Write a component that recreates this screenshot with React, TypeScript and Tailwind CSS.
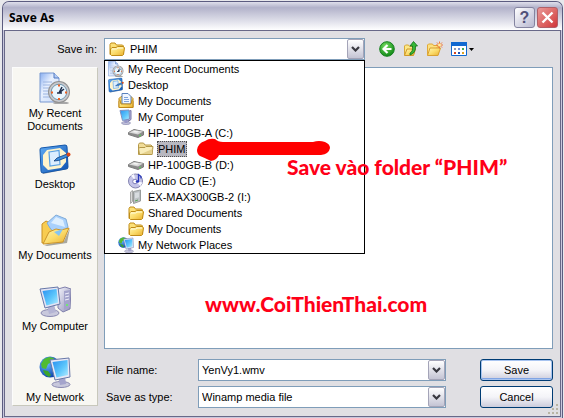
import { useState, type ComponentType, type ReactNode } from 'react'

type IconProps = { className?: string }

function IconDefs() {
  return (
    <svg className="absolute h-0 w-0" aria-hidden="true">
      <defs>
        <linearGradient id="folder" x1="0" y1="0" x2="1" y2="1">
          <stop offset="0" stopColor="#fff6b4" />
          <stop offset="0.5" stopColor="#fbdc6c" />
          <stop offset="1" stopColor="#e8ae2c" />
        </linearGradient>
        <linearGradient id="screen" x1="0" y1="0" x2="1" y2="1">
          <stop offset="0" stopColor="#2a90f0" />
          <stop offset="0.55" stopColor="#5cc6fc" />
          <stop offset="1" stopColor="#b4ecff" />
        </linearGradient>
        <linearGradient id="metal" x1="0" y1="0" x2="1" y2="1">
          <stop offset="0" stopColor="#f4f4fc" />
          <stop offset="1" stopColor="#9090b8" />
        </linearGradient>
        <linearGradient id="paper" x1="0" y1="0" x2="1" y2="1">
          <stop offset="0" stopColor="#88aef0" />
          <stop offset="0.4" stopColor="#e8f0fe" />
          <stop offset="1" stopColor="#c4d8f8" />
        </linearGradient>
        <linearGradient id="pad" x1="0" y1="0" x2="1" y2="1">
          <stop offset="0" stopColor="#60acf4" />
          <stop offset="1" stopColor="#0c50b0" />
        </linearGradient>
        <radialGradient id="globe" cx="0.35" cy="0.35" r="0.7">
          <stop offset="0" stopColor="#68b8ff" />
          <stop offset="1" stopColor="#0840a8" />
        </radialGradient>
        <radialGradient id="green" cx="0.4" cy="0.3" r="0.7">
          <stop offset="0" stopColor="#74dc60" />
          <stop offset="1" stopColor="#128a18" />
        </radialGradient>
      </defs>
    </svg>
  )
}

function RecentIcon({ className }: IconProps) {
  return (
    <svg viewBox="0 0 32 32" className={className} aria-hidden="true">
      <path d="M1 1h14l5 5v24H1z" fill="url(#paper)" stroke="#7898d0" />
      <path d="M15 1v5h5" fill="#b4ccf4" stroke="#5078c0" />
      <path d="M4 10h9M4 13h7M4 16h6M4 19h5M4 22h6M4 25h8" stroke="#9cb4e0" />
      <ellipse cx="22" cy="31" rx="8" ry="1.5" fill="#a8a8a8" />
      <circle cx="20" cy="20" r="11" fill="#909090" />
      <circle cx="20" cy="20" r="10" fill="#c8c8cc" />
      <circle cx="20" cy="20" r="7.8" fill="#eaf6fe" stroke="#7098b0" />
      <path d="M20 21l5-4M20 21l3-6M18 21h5" stroke="#20304c" strokeWidth="1.6" />
      <path d="M19 12.500h2v2h-2zM19 26h2v2h-2zM12 19.500h2v2h-2zM26 19.500h2v2h-2z" fill="#f06020" />
    </svg>
  )
}

function DesktopIcon({ className }: IconProps) {
  return (
    <svg viewBox="0 0 32 32" className={className} aria-hidden="true">
      <path d="M3 6l25-4 1 24-25 5z" fill="#a8a8a8" />
      <path d="M2 5l24-3q2 0 2 2l1 20q0 2-2 2L4 30q-2 0-2-2L1 7q0-2 1-2z" fill="url(#pad)" stroke="#1458ac" />
      <path d="M8 7l13-2 6 5v9l-5 6-13 2-5-5V12z" fill="#fff4cc" />
      <path d="M10 9l10-1.500 1 14-10 1.500z" fill="#dceeff" stroke="#58a0e4" strokeWidth="1.2" />
      <path d="M15 18l3-3 10-4 1.500 2.500-10 4z" fill="#3c8cdc" stroke="#103c78" strokeWidth="0.800" />
      <circle cx="29.500" cy="11.500" r="2" fill="#d84818" />
    </svg>
  )
}

function DocumentsIcon({ className }: IconProps) {
  return (
    <svg viewBox="0 0 32 32" className={className} aria-hidden="true">
      <path d="M5 31l20-4 6-13-3 15-20 3z" fill="#a8a8a0" />
      <path d="M3 29V10l4-3 4 2 2 4 12 2-1 11z" fill="#f8cc50" stroke="#c89024" />
      <path d="M8 9l9-8 10 4 2 8-11 9-7-8z" fill="#a8d0fc" stroke="#80acd8" />
      <path d="M12 9l5-6 7 3 2 7z" fill="#deeffe" />
      <path d="M4 30l6-12 7-3 5 1 8-2-6 14z" fill="url(#folder)" stroke="#cc9428" />
      <path d="M15 18l9-3-4 7z" fill="#84c4f4" />
    </svg>
  )
}

function ComputerIcon({ className }: IconProps) {
  return (
    <svg viewBox="0 0 32 32" className={className} aria-hidden="true">
      <path d="M19 4l7-2 6 2-1 20-7 3-5-4z" fill="url(#metal)" stroke="#8080ac" />
      <path d="M25 6l6-1v17l-6 3z" fill="#a4a4cc" />
      <path d="M26 9l4-1M26 12l4-1M26 15l4-1" stroke="#f0f0fc" />
      <path d="M27 19h2v2h-2z" fill="#70e870" />
      <ellipse cx="11" cy="28" rx="9" ry="3.500" fill="#c8c8dc" stroke="#8888b0" />
      <path d="M8 20l7-1 2 8-7 2z" fill="#b4b4d4" />
      <path d="M1 4l18-2 2 17-15 4z" fill="#e4e4f4" stroke="#6878a8" />
      <path d="M3.500 6l14-2 1.500 13.500L7.500 20.500z" fill="url(#screen)" />
    </svg>
  )
}

function NetworkIcon({ className }: IconProps) {
  return (
    <svg viewBox="0 0 32 32" className={className} aria-hidden="true">
      <circle cx="11" cy="11" r="10.500" fill="url(#globe)" />
      <path d="M5 3l5-2 5 1-2 4-4 2-2 5-4-1-1-4z" fill="#50bc30" />
      <path d="M4 14l5 1 3 4-2 2q-5-2-6-7z" fill="#3ca428" />
      <ellipse cx="22" cy="28.500" rx="9" ry="3" fill="#c8c8dc" stroke="#8888b0" />
      <path d="M19 21l7-1 1 8-6 1z" fill="#a4a4cc" />
      <path d="M11 4l19-2 1 19-15 3z" fill="#e8e8f6" stroke="#6878a8" />
      <path d="M13.500 6l15-2 .500 15-11.500 2.500z" fill="url(#screen)" />
    </svg>
  )
}

function FolderIcon({ className }: IconProps) {
  return (
    <svg viewBox="0 0 16 16" className={className} aria-hidden="true">
      <path d="M1 13.500V3.500l1-1.500h4l1.500 2h6l1 1v8.500z" fill="#fce078" stroke="#c08c18" />
      <path d="M2.500 14.500l-1-1V8l1.500-1.500h4L8.500 5.500h6l1 1.500-1 6.500-1 1z" fill="url(#folder)" stroke="#c08c18" />
      <path d="M3 8h4.500L9 7h5" stroke="#fffbdc" fill="none" />
    </svg>
  )
}

function OpenFolderIcon({ className }: IconProps) {
  return (
    <svg viewBox="0 0 16 16" className={className} aria-hidden="true">
      <path d="M.500 13.500v-10l1-1.500h4l1.500 2h6l1 1v8.500z" fill="#f0dc98" stroke="#b49848" />
      <path d="M1.500 13.500l-1-6 1.500-1h5l1-1h7l-1 8z" fill="#f8ecb8" stroke="#b49848" />
      <path d="M3 13l10.500 0 1-5z" fill="#e4d08c" />
    </svg>
  )
}

function SmallDocumentsIcon({ className }: IconProps) {
  return (
    <svg viewBox="0 0 16 16" className={className} aria-hidden="true">
      <path d="M1 14.500V5.500l2-2h10l2 2v9z" fill="#f8d060" stroke="#c08818" />
      <path d="M4 .500h6l3 3V11H4z" fill="#f0f6ff" stroke="#5880bc" />
      <path d="M6 4.500h4M6 6.500h5M6 8.500h5" stroke="#80a4dc" />
      <path d="M1 8.500l1-1 1 3.500h10l1-3.500 1 1v6H1z" fill="url(#folder)" stroke="#c08818" />
    </svg>
  )
}

function SmallComputerIcon({ className }: IconProps) {
  return (
    <svg viewBox="0 0 16 16" className={className} aria-hidden="true">
      <path d="M10 2.500l3-1v9l-3 2z" fill="#b4b4dc" stroke="#7878a8" />
      <ellipse cx="8" cy="14" rx="4.500" ry="1.500" fill="#c4c4dc" stroke="#8888b0" strokeWidth="0.700" />
      <path d="M6 10h4l-.500 4H6.500z" fill="#9898c8" />
      <path d="M2 1.500l9-.500.500 9-7 1.500z" fill="url(#screen)" stroke="#8090c0" />
    </svg>
  )
}

function DriveIcon({ className }: IconProps) {
  return (
    <svg viewBox="0 0 16 16" className={className} aria-hidden="true">
      <path d="M0.500 7.500L6 4.500l9.500 2v3.500L10 12.500l-9.500-3z" fill="#8c8c8c" stroke="#7c7c7c" />
      <path d="M1 7.500l5-2.500 9 1.500-5 3z" fill="#d8d8d8" />
      <path d="M4 7l3-1.200 4 .700-2 1.200z" fill="#f4f4f4" />
      <path d="M11 11l2-1" stroke="#50d850" />
    </svg>
  )
}

function DiscIcon({ className }: IconProps) {
  return (
    <svg viewBox="0 0 16 16" className={className} aria-hidden="true">
      <circle cx="7.500" cy="8" r="7" fill="#c4c4e8" stroke="#8484b0" />
      <path d="M7.500 8L3 2.500l3-1.500zM7.500 8l7 1.500-2 3.500z" fill="#f8f8ff" />
      <circle cx="7" cy="8.500" r="2.300" fill="#fff" stroke="#8080b8" />
      <path d="M10.500 8V1.500l2.500 2v2" fill="none" stroke="#2838b8" strokeWidth="1.300" />
      <ellipse cx="9.500" cy="8.500" rx="1.700" ry="1.200" fill="#2838b8" />
    </svg>
  )
}

function ExternalDriveIcon({ className }: IconProps) {
  return (
    <svg viewBox="0 0 16 16" className={className} aria-hidden="true">
      <path d="M2.500 3l2-1.500v11l-2 2z" fill="#d8d8d8" stroke="#a8a8a8" />
      <path d="M5.500 2.500l7-1.500v11l-7 2.500z" fill="#bcc0c4" stroke="#989c9c" />
      <path d="M7 4l4-.800v5L7 9.500z" fill="#d8dce0" />
      <path d="M7 12l3-1" stroke="#58a858" />
    </svg>
  )
}

function BackIcon({ className }: IconProps) {
  return (
    <svg viewBox="0 0 16 16" className={className} aria-hidden="true">
      <circle cx="8" cy="8" r="7.300" fill="url(#green)" stroke="#168020" />
      <path d="M12.500 8H5M8.500 4L4.500 8l4 4" fill="none" stroke="#fff" strokeWidth="2.200" />
    </svg>
  )
}

function UpIcon({ className }: IconProps) {
  return (
    <svg viewBox="0 0 16 16" className={className} aria-hidden="true">
      <path d="M1.500 14V5l1-1h3l1 1.500h4l1 1V12z" fill="#fce888" stroke="#d8a838" />
      <path d="M1.500 14.500L4 8h8.500l-2 6.500z" fill="url(#folder)" stroke="#d09828" />
      <path d="M7 12q3-1 2.500-7H7L10.500.500l4 4.500H12.500q.500 7-5.500 9z" fill="#38b838" stroke="#107018" strokeWidth="0.800" />
    </svg>
  )
}

function NewFolderIcon({ className }: IconProps) {
  return (
    <svg viewBox="0 0 16 16" className={className} aria-hidden="true">
      <path d="M.500 14V4l1-1h4l1 1.500h5v8.500z" fill="#fce080" stroke="#e0a838" />
      <path d="M.500 14.500L3 7h10.500l-2.500 7.500z" fill="url(#folder)" stroke="#d8a030" />
      <path d="M12.500.500v7M9 4h7M10 1.500l5 5M15 1.500l-5 5" stroke="#f07838" strokeWidth="1" />
      <circle cx="12.500" cy="4" r="1.500" fill="#fff0a0" />
    </svg>
  )
}

function ViewIcon({ className }: IconProps) {
  return (
    <svg viewBox="0 0 16 16" className={className} aria-hidden="true">
      <path d="M.500 1.500h15v13H.500z" fill="#fff" stroke="#1068d0" />
      <path d="M0 1h16v4H0z" fill="#1068d0" />
      <path d="M3 7h2v2H3z" fill="#9098b0" />
      <path d="M7 7h2v2H7z" fill="#7090d8" />
      <path d="M11 7h2v2h-2z" fill="#40a858" />
      <path d="M3 11h2v2H3z" fill="#d84820" />
      <path d="M7 11h2v2H7z" fill="#2050b0" />
      <path d="M11 11h2v2h-2z" fill="#e0a020" />
    </svg>
  )
}

function Chevron() {
  return (
    <svg viewBox="0 0 9 6" className="h-[6px] w-[9px]" aria-hidden="true">
      <path d="M1 1l3.500 3.500L8 1" fill="none" stroke="#383840" strokeWidth="2.200" />
    </svg>
  )
}

const arrowBox =
  'flex w-[17px] items-center justify-center rounded-[2px] border border-[#a4a4b8] bg-linear-to-b from-white to-[#c4c4d4]'

const places: { name: string; icon: ComponentType<IconProps> }[] = [
  { name: 'My Recent Documents', icon: RecentIcon },
  { name: 'Desktop', icon: DesktopIcon },
  { name: 'My Documents', icon: DocumentsIcon },
  { name: 'My Computer', icon: ComputerIcon },
  { name: 'My Network', icon: NetworkIcon },
]

const indents = ['pl-[3px]', 'pl-[13px]', 'pl-[23px]', 'pl-[33px]']

const folders: { name: string; level: number; icon: ComponentType<IconProps> }[] = [
  { name: 'My Recent Documents', level: 0, icon: RecentIcon },
  { name: 'Desktop', level: 0, icon: DesktopIcon },
  { name: 'My Documents', level: 1, icon: SmallDocumentsIcon },
  { name: 'My Computer', level: 1, icon: SmallComputerIcon },
  { name: 'HP-100GB-A (C:)', level: 2, icon: DriveIcon },
  { name: 'PHIM', level: 3, icon: OpenFolderIcon },
  { name: 'HP-100GB-B (D:)', level: 2, icon: DriveIcon },
  { name: 'Audio CD (E:)', level: 2, icon: DiscIcon },
  { name: 'EX-MAX300GB-2 (I:)', level: 2, icon: ExternalDriveIcon },
  { name: 'Shared Documents', level: 2, icon: FolderIcon },
  { name: 'My Documents', level: 2, icon: FolderIcon },
  { name: 'My Network Places', level: 1, icon: NetworkIcon },
]

function ToolButton({ label, children }: { label: string; children: ReactNode }) {
  return (
    <button type="button" aria-label={label} className="flex items-center">
      {children}
    </button>
  )
}

function DialogButton({ children, primary = false }: { children: ReactNode; primary?: boolean }) {
  return (
    <button
      type={primary ? 'submit' : 'button'}
      className={`h-[22px] rounded-[3px] border border-[#003c74] bg-linear-to-b from-white via-[#f4f4f8] to-[#ccccdc] ${
        primary ? 'shadow-[inset_0_0_0_1px_#a8c4f0,inset_0_-2px_0_#80a4e4]' : ''
      }`}
    >
      {children}
    </button>
  )
}

export default function App() {
  const [selected, setSelected] = useState(5)
  const [fileName, setFileName] = useState('YenVy1.wmv')

  return (
    <div className="min-h-screen overflow-hidden bg-[#e8e8ec] pt-px pr-px pl-[2px] font-['Liberation_Sans',Arial,sans-serif] text-[11px] leading-[13px] text-black">
      <IconDefs />
      <div className="flex min-h-[calc(100vh-1px)] flex-col rounded-t-[7px] border border-b-0 border-[#5c5c80] bg-[#c8c8dc]">
        <header className="flex h-[28px] items-center rounded-t-[6px] bg-linear-to-b from-[#e0e0ec] via-[#b2b2ca] via-20% to-white pr-[4px] pl-[6px]">
          <h1 className="flex-1 pt-[3px] font-['Open_Sans',sans-serif] text-[12px] font-bold">Save As</h1>
          <div className="flex gap-[2px] pt-[3px]">
            <button
              type="button"
              aria-label="Help"
              className="flex h-[21px] w-[21px] items-center justify-center rounded-[3px] border border-[#8484a0] bg-linear-to-br from-white to-[#b8b8d0] text-[16px] font-bold text-[#505078]"
            >
              ?
            </button>
            <button
              type="button"
              aria-label="Close"
              className="flex h-[21px] w-[21px] items-center justify-center rounded-[3px] border border-[#b06068] bg-linear-to-br from-[#e89898] to-[#d03038]"
            >
              <svg viewBox="0 0 13 13" className="h-[13px] w-[13px]" aria-hidden="true">
                <path d="M1.500 1.500l10 10M11.500 1.500l-10 10" stroke="#fff" strokeWidth="2.400" />
              </svg>
            </button>
          </div>
        </header>

        <form
          onSubmit={(e) => e.preventDefault()}
          className="relative mx-px mb-px flex flex-1 flex-col border border-[#686888] bg-[#e0dfe3] px-[7px] pt-[7px] pb-[8px]"
        >
          <div className="flex h-[22px] items-center">
            <label htmlFor="save-in" className="w-[92px] shrink-0 pr-[7px] text-right">
              Save in:
            </label>
            <div className="relative z-10 h-[22px] flex-1">
              <select
                id="save-in"
                value={selected}
                onChange={(e) => setSelected(Number(e.target.value))}
                className="h-full w-full appearance-none border border-[#7f9db9] bg-white pl-[25px]"
              >
                {folders.map((folder, i) => (
                  <option key={i} value={i}>
                    {folder.name}
                  </option>
                ))}
              </select>
              <FolderIcon className="pointer-events-none absolute top-[3px] left-[5px] h-[16px] w-[16px]" />
              <span className={`pointer-events-none absolute inset-y-px right-px ${arrowBox}`}>
                <Chevron />
              </span>

              <ul role="listbox" aria-label="Folders" className="absolute inset-x-0 top-full border border-black bg-white">
                {folders.map(({ name, level, icon: Icon }, i) => (
                  <li
                    key={i}
                    role="option"
                    aria-selected={i === selected}
                    onClick={() => setSelected(i)}
                    className={`flex h-[16px] items-center gap-[3px] ${indents[level]}`}
                  >
                    <Icon className="h-[16px] w-[16px] shrink-0" />
                    <span
                      className={
                        i === selected
                          ? 'border border-dotted border-[#505050] bg-[#b8b8c0] leading-[14px]'
                          : 'border border-transparent'
                      }
                    >
                      {name}
                    </span>
                  </li>
                ))}
              </ul>
            </div>
            <div className="flex w-[188px] shrink-0 items-center gap-[8px] pl-[14px]">
              <ToolButton label="Back">
                <BackIcon className="h-[16px] w-[16px]" />
              </ToolButton>
              <ToolButton label="Up one level">
                <UpIcon className="h-[16px] w-[16px]" />
              </ToolButton>
              <ToolButton label="New folder">
                <NewFolderIcon className="h-[16px] w-[16px]" />
              </ToolButton>
              <ToolButton label="View">
                <ViewIcon className="h-[16px] w-[16px]" />
                <svg viewBox="0 0 5 3" className="ml-[2px] h-[3px] w-[5px]" aria-hidden="true">
                  <path d="M0 0h5L2.500 3z" fill="#000" />
                </svg>
              </ToolButton>
            </div>
          </div>

          <div className="mt-[7px] flex flex-1 gap-[6px]">
            <nav className="mb-[2px] flex w-[86px] shrink-0 flex-col border border-[#fcfcfc] border-r-[#c8c8bc] border-b-[#c8c8bc] bg-[#f8f7f2] pt-[4px]">
              {places.map(({ name, icon: Icon }) => (
                <button
                  key={name}
                  type="button"
                  className="flex h-[71px] flex-col items-center gap-[3px] px-[2px] last:h-[48px]"
                >
                  <Icon className="h-[32px] w-[32px] shrink-0" />
                  {name}
                </button>
              ))}
            </nav>

            <div className="flex flex-1 flex-col gap-[10px]">
              <div className="relative flex-1 border border-[#7f9db9] bg-white">
                <p className="absolute top-[224px] left-[100px] font-['Lato',sans-serif] text-[21px] leading-[24px] font-black whitespace-nowrap text-[#ff0018]">
                  www.CoiThienThai.com
                </p>
              </div>
              <div className="grid grid-cols-[94px_1fr_73px] gap-y-[5px]">
                <label htmlFor="file-name" className="self-center pl-[2px]">
                  File name:
                </label>
                <div className="mr-[34px] flex h-[22px] border border-[#7f9db9] bg-white">
                  <input
                    id="file-name"
                    value={fileName}
                    onChange={(e) => setFileName(e.target.value)}
                    className="min-w-0 flex-1 pl-[3px] outline-none"
                  />
                  <button type="button" aria-label="Recent names" className={arrowBox}>
                    <Chevron />
                  </button>
                </div>
                <DialogButton primary>Save</DialogButton>

                <label htmlFor="file-type" className="self-center pl-[2px]">
                  Save as type:
                </label>
                <div className="relative mr-[34px] h-[22px]">
                  <select
                    id="file-type"
                    className="h-full w-full appearance-none border border-[#7f9db9] bg-white pl-[3px]"
                  >
                    <option>Winamp media file</option>
                  </select>
                  <span className={`pointer-events-none absolute inset-y-px right-px ${arrowBox}`}>
                    <Chevron />
                  </span>
                </div>
                <DialogButton>Cancel</DialogButton>
              </div>
            </div>
          </div>

          {/* resize grip */}
          <svg viewBox="0 0 11 11" className="absolute right-px bottom-px h-[11px] w-[11px]" aria-hidden="true">
            <path d="M8 0h2v2H8zM8 4h2v2H8zM8 8h2v2H8zM4 4h2v2H4zM4 8h2v2H4zM0 8h2v2H0z" fill="#b8b4a4" />
          </svg>

          {/* hand-drawn pointer to the target folder */}
          <svg
            viewBox="0 0 134 24"
            className="pointer-events-none absolute top-[107px] left-[192px] z-20 h-[24px] w-[134px]"
            aria-hidden="true"
          >
            <path
              d="M0 12Q1 5 8 3Q12 0 18 1Q21 4 26 4H116Q122 2 128 4Q133 6 133 10Q132 16 124 17H22Q20 22 14 23Q8 20 3 18Q0 16 0 12Z"
              fill="#ff0000"
            />
          </svg>
          <p className="pointer-events-none absolute top-[124px] left-[282px] z-20 font-['Lato',sans-serif] text-[21px] leading-[24px] font-black whitespace-nowrap text-[#ff0018]">
            Save vào folder “PHIM”
          </p>
        </form>
      </div>
    </div>
  )
}
